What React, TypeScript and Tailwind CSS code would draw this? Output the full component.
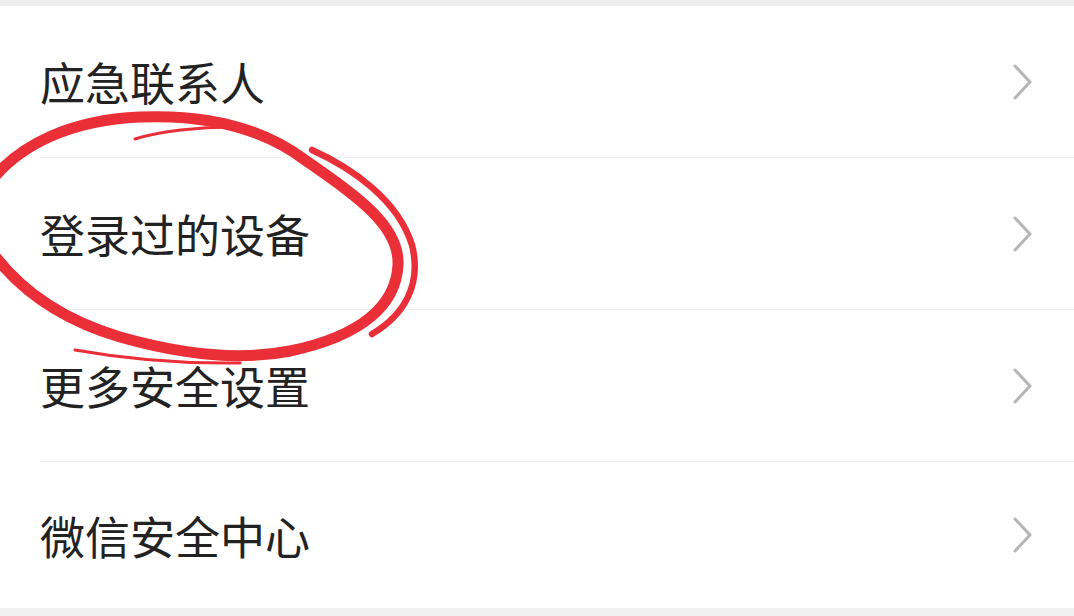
import React from "react";

const items = ["应急联系人", "登录过的设备", "更多安全设置", "微信安全中心"];

const Chevron = () => (
  <svg width="22" height="36" viewBox="0 0 22 36" fill="none">
    <polyline
      points="3,2 18,18 3,34"
      stroke="#b5b5b5"
      strokeWidth="3"
      strokeLinecap="round"
      strokeLinejoin="round"
    />
  </svg>
);

const Circle = () => (
  <svg
    className="absolute left-0 top-0 pointer-events-none"
    width="440"
    height="380"
    viewBox="0 0 440 380"
    fill="none"
  >
    {/* main loop */}
    <path
      d="M -8 180 C 20 145, 70 120, 140 117 C 210 114, 265 130, 305 160 C 355 195, 400 225, 398 265 C 396 305, 362 336, 290 351 C 240 361, 180 354, 120 337 C 70 322, 25 297, -8 252"
      stroke="#ea2f38"
      strokeWidth="11"
      strokeLinecap="round"
    />
    {/* outer second pass on the right */}
    <path
      d="M 312 150 C 352 168, 398 200, 412 245 C 422 285, 404 315, 372 334"
      stroke="#ea2f38"
      strokeWidth="6.5"
      strokeLinecap="round"
    />
    {/* thin inner stroke at the top */}
    <path
      d="M 135 139 C 160 131, 200 127, 232 127"
      stroke="#ea2f38"
      strokeWidth="3"
      strokeLinecap="round"
    />
    {/* thin stroke under the bottom */}
    <path
      d="M 75 350 C 120 358, 180 364, 240 363"
      stroke="#ea2f38"
      strokeWidth="3"
      strokeLinecap="round"
    />
  </svg>
);

export default function App() {
  return (
    <div
      className="relative w-[1074px] h-[616px] overflow-hidden bg-white flex flex-col"
      style={{ fontFamily: '"Noto Sans CJK SC", "Noto Sans", sans-serif' }}
    >
      <div className="h-[6px] bg-[#ededed]" />
      {items.map((label, i) => (
        <div
          key={label}
          className={
            i < items.length - 1
              ? "h-[152px] pl-[40px] flex flex-col"
              : "h-[146px] pl-[40px] flex flex-col"
          }
        >
          <div
            className={
              i < items.length - 1
                ? "flex-1 flex items-center justify-between pr-[40px] border-b border-[#efefef]"
                : "flex-1 flex items-center justify-between pr-[40px]"
            }
          >
            <span className="text-[45px] leading-none text-[#222222]">{label}</span>
            <Chevron />
          </div>
        </div>
      ))}
      <div className="flex-1 bg-[#f0f0f0]" />
      <Circle />
    </div>
  );
}
